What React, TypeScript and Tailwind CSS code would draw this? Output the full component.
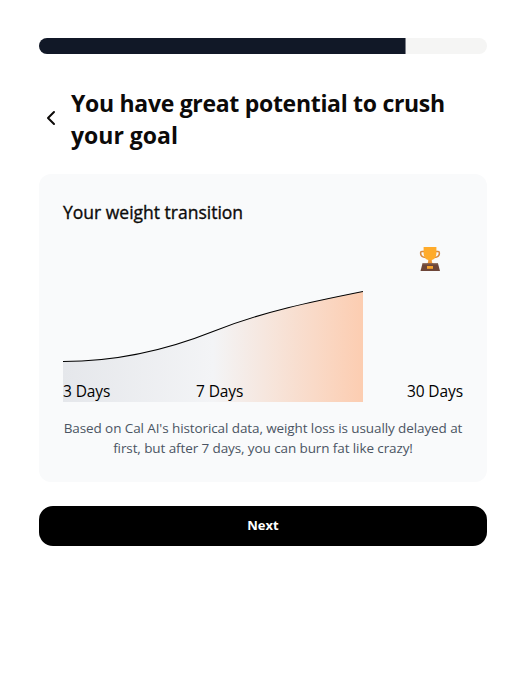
import React from "react";
import { ChevronLeft } from "lucide-react";

function Trophy() {
  return (
    <svg width="22" height="26" viewBox="0 0 22 26" aria-hidden="true">
      <path d="M5 5.500H3Q1.600 5.500 1.600 7c0 2.600 2 4.300 5 4.500M17 5.500h2q1.400 0 1.400 1.500c0 2.600-2 4.300-5 4.500" fill="none" stroke="#d8893e" strokeWidth="1.500" />
      <path d="M9.500 12h3l.5 4.500 1.500 1.500h-7L9 16.500z" fill="#f19534" />
      <path d="M4.600 1h12.800v6c0 4-2.200 7.200-6.400 7.200S4.600 11 4.600 7z" fill="#ffab2b" />
      <path d="M3.500 17.500h15.500l2 7.500H1.500z" fill="#6d4538" />
      <path d="M3.500 17.300h15.500v1.200h-15.500z" fill="#84604f" />
      <rect x="8" y="20" width="6" height="2.800" fill="#f8a32d" />
    </svg>
  );
}

function TransitionChart() {
  return (
    <svg className="block" width="300" height="130" viewBox="0 0 300 130" aria-hidden="true">
      <defs>
        <linearGradient id="weight" x1="0" x2="1" y1="0" y2="0">
          <stop offset="0%" stopColor="#e5e7eb" />
          <stop offset="50%" stopColor="#f3f4f6" />
          <stop offset="100%" stopColor="#fccdb1" />
        </linearGradient>
      </defs>
      <path d="M0 89.500C50 89.500 100 79.500 150 59.500S250 29.500 300 19.500V130H0Z" fill="url(#weight)" />
      <path d="M0 89.500C50 89.500 100 79.500 150 59.500S250 29.500 300 19.500" fill="none" stroke="#000" strokeWidth="1.100" />
    </svg>
  );
}

export default function App() {
  return (
    <main className="min-h-[684px] bg-white pt-[38px] pl-[39px] font-['Open_Sans','Noto_Sans',sans-serif] text-[#0c0a09]">
      <div className="flex w-[448px] flex-col">
        <div className="h-4 overflow-hidden rounded-full bg-[#f5f5f4]">
          <div className="h-full w-[366px] border-r border-[#7d8089] box-content bg-[#111827]" />
        </div>
        <div className="mt-[33px] flex items-start">
          <button aria-label="Back" className="mt-[19px] flex w-8 justify-start">
            <ChevronLeft size={24} strokeWidth={2} />
          </button>
          <h1 className="text-[23px] leading-8 font-bold whitespace-nowrap">
            <span className="block tracking-[-0.300px]">You have great potential to crush</span>
            <span className="block">your goal</span>
          </h1>
        </div>
        <section className="mt-[23px] h-[308px] rounded-xl bg-[#f9fafb] px-6 pt-6">
          <h2 className="text-[17.500px] leading-7 font-medium whitespace-nowrap [-webkit-text-stroke:0.350px_#0c0a09]">Your weight transition</h2>
          <div className="relative mt-[46px] h-[130px]">
            <TransitionChart />
            <div className="absolute top-[-26px] left-[356px]"><Trophy /></div>
            <div className="absolute inset-x-0 bottom-[-1px] flex justify-between text-[15.500px] leading-6 tracking-[-0.100px] text-black">
              <span>3 Days</span>
              <span className="-ml-[78px]">7 Days</span>
              <span>30 Days</span>
            </div>
          </div>
          <p className="mt-4 text-center text-[13.500px] leading-5 tracking-[-0.100px] whitespace-nowrap text-[#4b5563]">
            <span className="block">Based on Cal AI's historical data, weight loss is usually delayed at</span>
            <span className="block">first, but after 7 days, you can burn fat like crazy!</span>
          </p>
        </section>
        <button className="mt-6 h-10 rounded-[14px] bg-black text-[13px] font-bold text-white">Next</button>
      </div>
    </main>
  );
}
